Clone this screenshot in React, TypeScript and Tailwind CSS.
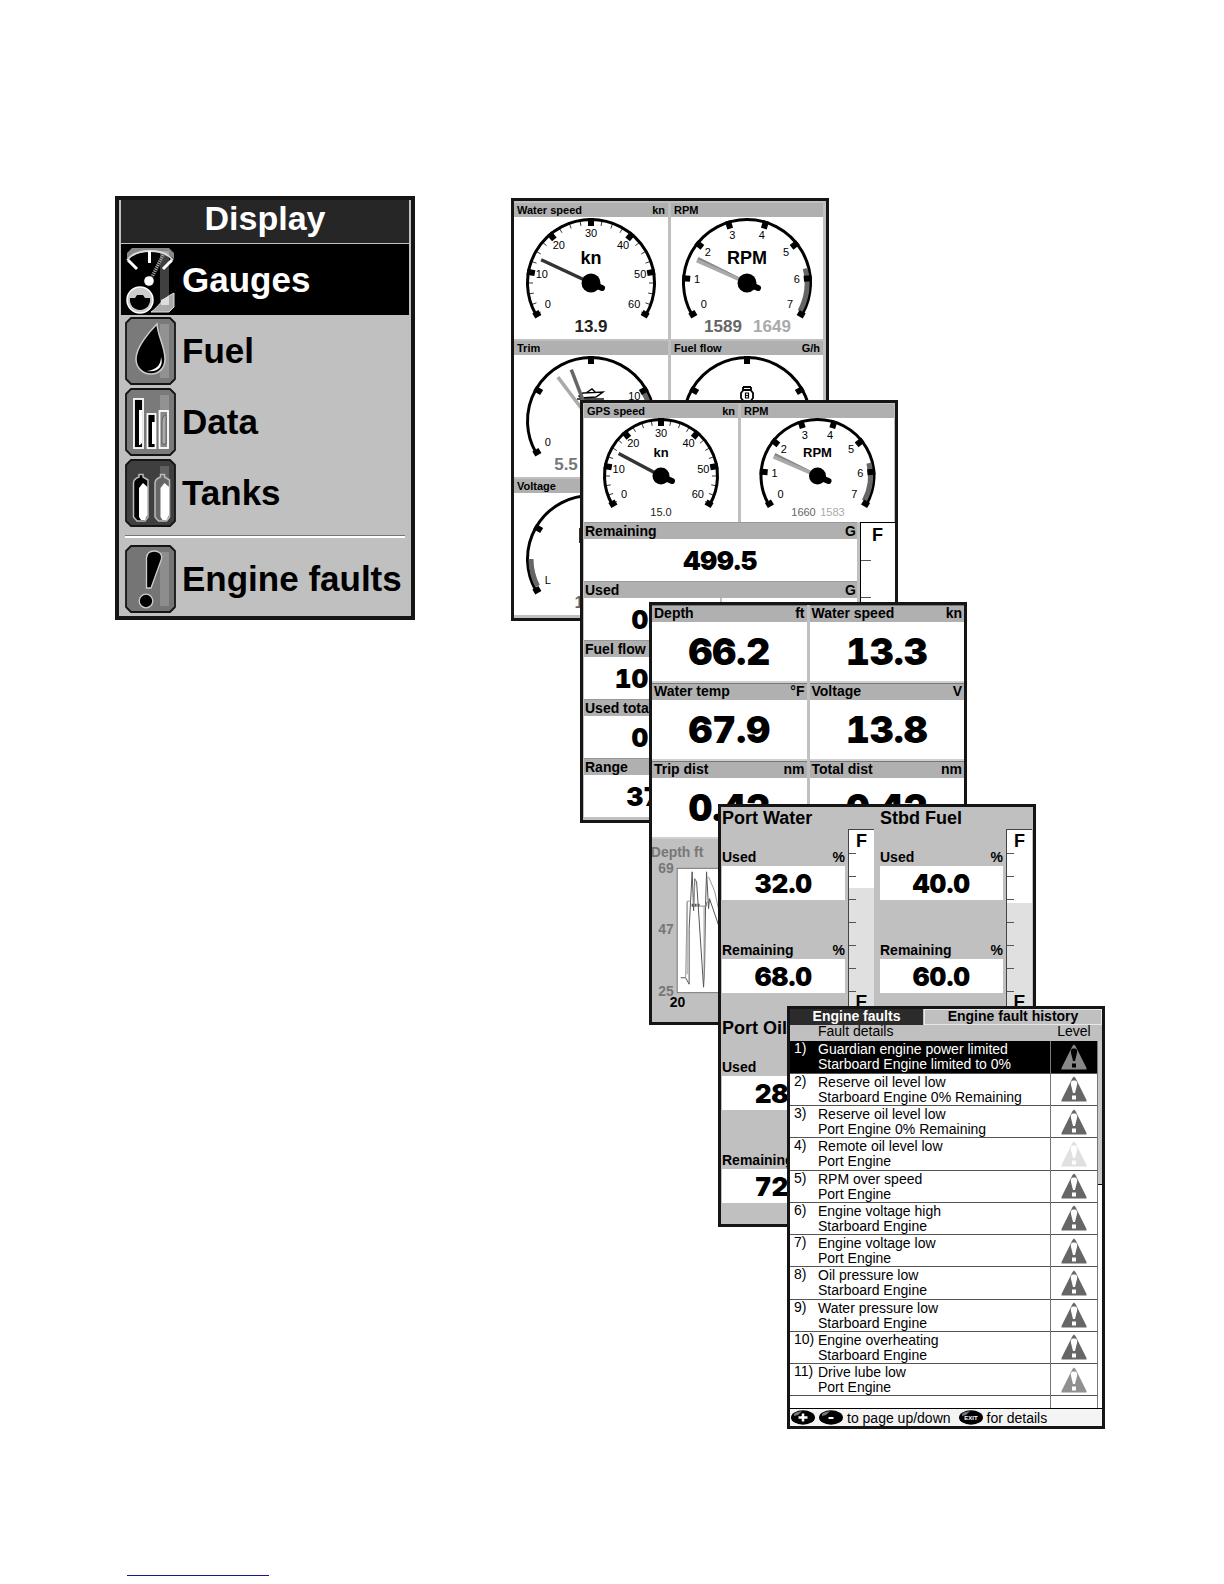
import { useState } from "react";
import type { ReactNode } from "react";

type Needle = { angle: number; color: string };
type Value = { text: string; x: number; color: string };

type GaugeProps = {
  steps: number;
  labels: (string | null)[];
  minor?: boolean;
  zone?: [number, number];
  title?: string;
  needles?: Needle[];
  values?: Value[];
  small?: boolean;
  children?: ReactNode;
};

// 0 degrees points right, angles grow counter-clockwise
const polar = (r: number, deg: number) => {
  const a = (deg * Math.PI) / 180;
  return [r * Math.cos(a), -r * Math.sin(a)];
};

const arc = (r: number, from: number, to: number) => {
  const [x1, y1] = polar(r, from);
  const [x2, y2] = polar(r, to);
  return `M${x1} ${y1}A${r} ${r} 0 ${Math.abs(from - to) > 180 ? 1 : 0} ${from > to ? 1 : 0} ${x2} ${y2}`;
};

function Tick({ r, deg, len, width }: { r: number; deg: number; len: number; width: number }) {
  const [x1, y1] = polar(r, deg);
  const [x2, y2] = polar(r - len, deg);
  return <line x1={x1} y1={y1} x2={x2} y2={y2} stroke="#000" strokeWidth={width} />;
}

function Gauge({
  steps,
  labels,
  minor,
  zone,
  title,
  needles = [],
  values = [],
  small,
  children,
}: GaugeProps) {
  const r = small ? 58 : 65;
  const step = 240 / steps;
  return (
    <svg
      viewBox={small ? "-75 -58 150 104" : "-75 -66 150 122"}
      className={small ? "block h-[104px] w-full" : "block h-[122px] w-full"}
    >
      <path d={arc(r - 1.5, 210, -30)} fill="none" stroke="#000" strokeWidth="3" />
      {zone && (
        <path d={arc(r - 5, zone[0], zone[1])} fill="none" stroke="#666" strokeWidth="5" />
      )}
      {minor &&
        Array.from({ length: steps * 4 + 1 }, (_, i) => (
          <Tick key={i} r={r - 1} deg={210 - (i * step) / 4} len={6} width={0.8} />
        ))}
      {labels.map((label, i) => {
        const deg = 210 - i * step;
        const end = i === 0 || i === steps;
        const [x, y] = polar(end ? r - 17 : r - 15, Math.max(-26, Math.min(206, deg)));
        return (
          <g key={i}>
            <Tick r={end ? r + 1 : r} deg={deg} len={end ? 7 : 8} width={6} />
            {label && (
              <text x={x} y={y + 4} textAnchor="middle" className="text-[11px]">
                {label}
              </text>
            )}
          </g>
        );
      })}
      {title && (
        <text
          y="-19"
          textAnchor="middle"
          className={small ? "text-[13px] font-bold" : "text-[18px] font-bold"}
        >
          {title}
        </text>
      )}
      {children}
      {needles.map((n) => {
        const [x, y] = polar(r - 10, n.angle);
        return (
          <line key={n.angle} x2={x} y2={y} stroke={n.color} strokeWidth="3.5" />
        );
      })}
      <circle r={small ? 8.5 : 9.5} />
      <path d="M4 2L11 5" stroke="#000" strokeWidth="6" strokeLinecap="round" />
      {values.map((v) => (
        <text
          key={v.text}
          x={v.x}
          y={small ? 40 : 49}
          textAnchor="middle"
          fill={v.color}
          className={small ? "text-[11px]" : "text-[17px] font-bold"}
        >
          {v.text}
        </text>
      ))}
    </svg>
  );
}

function GaugeCell({ name, unit, children }: { name: string; unit?: string; children: ReactNode }) {
  return (
    <div className="bg-white">
      <div className="flex h-[14px] items-center justify-between bg-[#b0b0b0] px-[3px] text-[11px] leading-[14px] font-bold">
        <span>{name}</span>
        <span>{unit}</span>
      </div>
      {children}
    </div>
  );
}

function Screen({ className = "", children }: { className?: string; children: ReactNode }) {
  return (
    <section
      className={`relative flex h-[423px] w-[318px] flex-col overflow-hidden border-3 border-[#151515] bg-[#c0c0c0] ${className}`}
    >
      {children}
    </section>
  );
}

function GaugesScreen() {
  return (
    <Screen>
      <div className="grid grid-cols-[154px_1fr] gap-x-[3px] gap-y-[2px] pt-[2px] pr-[3px]">
        <GaugeCell name="Water speed" unit="kn">
          <Gauge
            steps={6}
            labels={["0", "10", "20", "30", "40", "50", "60"]}
            minor
            title="kn"
            needles={[{ angle: 155, color: "#333" }]}
            values={[{ text: "13.9", x: 0, color: "#222" }]}
          />
        </GaugeCell>
        <GaugeCell name="RPM">
          <Gauge
            steps={7}
            labels={["0", "1", "2", "3", "4", "5", "6", "7"]}
            zone={[14, -28]}
            title="RPM"
            needles={[
              { angle: 153.5, color: "#888" },
              { angle: 156, color: "#aaa" },
            ]}
            values={[
              { text: "1589", x: -24, color: "#666" },
              { text: "1649", x: 25, color: "#aaa" },
            ]}
          />
        </GaugeCell>
        <GaugeCell name="Trim">
          <Gauge
            steps={4}
            labels={["0", null, null, "10", null]}
            zone={[30, 0]}
            needles={[
              { angle: 127, color: "#aaa" },
              { angle: 111, color: "#666" },
            ]}
            values={[{ text: "5.5", x: -25, color: "#777" }]}
          >
            <g fill="none" stroke="#000" strokeWidth="1.4">
              <path d="M-12 -25L-8 -28L12 -29L5 -24L-10 -23ZM-5 -28L1 -32L4 -29" />
              <path d="M-14 -22H13" />
            </g>
          </Gauge>
        </GaugeCell>
        <GaugeCell name="Fuel flow" unit="G/h">
          <Gauge steps={4} labels={[null, null, null, null, null]}>
            <g fill="none" stroke="#000" strokeWidth="1.8">
              <path d="M-3.5 -31H3.5L6 -28V-23L3.5 -20H-3.5L-6 -23V-28Z" />
              <path d="M-4 -34V-31M4 -34V-31M-4 -34H4" />
              <path d="M-1.5 -28H1.5V-23H-1.5ZM-1.5 -25.5H1.5" strokeWidth="1.2" />
            </g>
          </Gauge>
        </GaugeCell>
        <GaugeCell name="Voltage">
          <Gauge
            steps={4}
            labels={["L", null, null, null, null]}
            zone={[207, 180]}
            values={[{ text: "13.9", x: 0, color: "#666" }]}
          >
            <path d="M-11 -30H11V-17H-11Z" fill="none" stroke="#333" strokeWidth="2" />
          </Gauge>
        </GaugeCell>
      </div>
    </Screen>
  );
}

const fuelRows = [
  { name: "Remaining", unit: "G", value: "499.5", wide: true },
  { name: "Used", unit: "G", value: "0.0" },
  { name: "Fuel flow", value: "10.10" },
  { name: "Used total", value: "0.0" },
  { name: "Range", value: "370" },
];

function FuelScreen() {
  return (
    <Screen className="-mt-[221px] ml-[69px]">
      <div className="grid grid-cols-[154px_1fr] gap-x-[3px] px-px pt-px">
        <GaugeCell name="GPS speed" unit="kn">
          <Gauge
            small
            steps={6}
            labels={["0", "10", "20", "30", "40", "50", "60"]}
            minor
            title="kn"
            needles={[{ angle: 152, color: "#333" }]}
            values={[{ text: "15.0", x: 0, color: "#222" }]}
          />
        </GaugeCell>
        <GaugeCell name="RPM">
          <Gauge
            small
            steps={7}
            labels={["0", "1", "2", "3", "4", "5", "6", "7"]}
            zone={[14, -28]}
            title="RPM"
            needles={[
              { angle: 153.5, color: "#888" },
              { angle: 156.5, color: "#aaa" },
            ]}
            values={[
              { text: "1660", x: -14, color: "#666" },
              { text: "1583", x: 15, color: "#aaa" },
            ]}
          />
        </GaugeCell>
      </div>
      <div className="flex flex-1">
        <div className="flex flex-1 flex-col pl-px">
          {fuelRows.map((row) => (
            <div key={row.name} className="h-[59px] bg-white">
              <div className="flex h-[17px] justify-between border-t border-[#999] bg-[#b0b0b0] px-px text-[14px] leading-4 font-bold whitespace-nowrap">
                <span>{row.name}</span>
                <span>{row.unit}</span>
              </div>
              <div className="flex h-[42px]">
                <div className="flex flex-1 items-center justify-center pt-[2px] font-[Inter,sans-serif] text-[26px] leading-none font-black tabular-nums">
                  {row.value}
                </div>
                {!row.wide && <div className="flex-1 border-l-2 border-[#c0c0c0]" />}
              </div>
            </div>
          ))}
        </div>
        <div className="ml-[3px] flex w-[35px] flex-col border-t border-l border-black bg-white">
          <div className="h-[37px] pt-[2px] pl-[11px] text-[18px] leading-5 font-bold">F</div>
          {[0, 1, 2, 3, 4, 5, 6].map((i) => (
            <div key={i} className="h-[37px] w-[10px] border-t border-[#555]" />
          ))}
        </div>
      </div>
    </Screen>
  );
}

const readings = [
  { name: "Depth", unit: "ft", value: "66.2" },
  { name: "Water speed", unit: "kn", value: "13.3" },
  { name: "Water temp", unit: "°F", value: "67.9" },
  { name: "Voltage", unit: "V", value: "13.8" },
  { name: "Trip dist", unit: "nm", value: "0.42" },
  { name: "Total dist", unit: "nm", value: "0.42" },
];

function DataScreen() {
  return (
    <Screen className="-mt-[221px] ml-[138px]">
      <div className="grid grid-cols-2 gap-x-[3px]">
        {readings.map((d) => (
          <div key={d.name} className="flex h-[78px] flex-col bg-white">
            <div className="flex h-[17px] justify-between border-t border-[#777] bg-[#b0b0b0] px-[2px] text-[14px] leading-[15px] font-bold">
              <span>{d.name}</span>
              <span>{d.unit}</span>
            </div>
            <div className="flex flex-1 items-center justify-center border-b-2 border-[#d0d0d0] font-[Inter,sans-serif] text-[37px] leading-none font-black tabular-nums">
              {d.value}
            </div>
          </div>
        ))}
      </div>
      <svg viewBox="0 0 312 184" className="block w-full">
        <g fill="#777" className="text-[14px] font-bold">
          <text x="-2" y="18">Depth ft</text>
          <text x="21" y="34" textAnchor="end">69</text>
          <text x="21" y="96" textAnchor="end">47</text>
          <text x="21" y="158" textAnchor="end">25</text>
        </g>
        <text x="17" y="169" className="text-[14px] font-bold">20</text>
        <rect x="24.5" y="29.5" width="272" height="125" fill="#fff" stroke="#777" />
        <g fill="none" stroke="#555" strokeWidth="1">
          <path d="M28 139.5H33L36.5 146V90L39.5 33L41 72L42 40L44 43L51 149L52 130L53 66L54 33L56 70L57 60L76 116" />
          <path d="M33 139L34.5 62.5H38M34.5 63V136M41 67L42.5 40M56 38L62 52L69 84L76 96M51.5 68V140" stroke="#999" />
          <path d="M39 66.5H47" strokeWidth="3" strokeDasharray="2 1" />
          <path d="M47 67.5H54V63.5H57" stroke="#888" />
        </g>
      </svg>
    </Screen>
  );
}

const tanks = [
  { name: "Port Water", used: "32.0", remaining: "68.0", empty: "h-[58px]" },
  { name: "Stbd Fuel", used: "40.0", remaining: "60.0", empty: "h-[73px]" },
  { name: "Port Oil", used: "28.0", remaining: "72.0" },
];

function TankReading({ name, unit, value }: { name: string; unit?: string; value: string }) {
  return (
    <div>
      <div className="flex justify-between text-[14px] leading-4 font-bold">
        <span>{name}</span>
        <span>{unit}</span>
      </div>
      <div className="mt-px flex h-[34px] items-center justify-center bg-white pt-px font-[Inter,sans-serif] text-[26px] leading-none font-black tabular-nums">
        {value}
      </div>
    </div>
  );
}

function TankLevel({ empty }: { empty: string }) {
  return (
    <div className="relative mt-[22px] h-[183px] w-[26px] border-t border-l border-[#444] bg-[#e0e0e0]">
      <div className={`bg-white ${empty}`} />
      <div className="absolute inset-0 flex flex-col">
        {[0, 1, 2, 3, 4, 5, 6, 7].map((i) => (
          <div
            key={i}
            className={`h-[23px] w-[7px] shrink-0 ${i > 0 ? "border-t border-[#555]" : ""}`}
          />
        ))}
      </div>
      <div className="absolute inset-0 flex flex-col items-center justify-between pt-px text-[18px] leading-5 font-bold">
        <span>F</span>
        <span>E</span>
      </div>
    </div>
  );
}

function TanksScreen() {
  return (
    <Screen className="-mt-[221px] ml-[207px]">
      <div className="grid grid-cols-2 gap-x-1">
        {tanks.map((t) => (
          <div key={t.name} className="flex h-[210px] gap-[3px] pl-px">
            <div className="w-[123px]">
              <h3 className="h-[42px] text-[18px] leading-[22px] font-bold">{t.name}</h3>
              <TankReading name="Used" unit={t.empty && "%"} value={t.used} />
              <div className="h-[42px]" />
              <TankReading name="Remaining" unit={t.empty && "%"} value={t.remaining} />
            </div>
            {t.empty && <TankLevel empty={t.empty} />}
          </div>
        ))}
      </div>
    </Screen>
  );
}

const faults = [
  { title: "Guardian engine power limited", detail: "Starboard Engine limited to 0%", color: "#888" },
  { title: "Reserve oil level low", detail: "Starboard Engine 0% Remaining", color: "#666" },
  { title: "Reserve oil level low", detail: "Port Engine 0% Remaining", color: "#666" },
  { title: "Remote oil level low", detail: "Port Engine", color: "#e0e0e0" },
  { title: "RPM over speed", detail: "Port Engine", color: "#666" },
  { title: "Engine voltage high", detail: "Starboard Engine", color: "#666" },
  { title: "Engine voltage low", detail: "Port Engine", color: "#666" },
  { title: "Oil pressure low", detail: "Starboard Engine", color: "#666" },
  { title: "Water pressure low", detail: "Starboard Engine", color: "#666" },
  { title: "Engine overheating", detail: "Starboard Engine", color: "#666" },
  { title: "Drive lube low", detail: "Port Engine", color: "#909090" },
];

function WarningIcon({ color, mark }: { color: string; mark: string }) {
  return (
    <svg viewBox="0 0 26 26" className="mx-auto block size-[26px]">
      <path d="M13 .5L14.5 2L25.5 24V25.5H.5V24L11.5 2Z" fill={color} />
      <path d="M13 4.5C16 4.5 16.5 6.5 16 9L14 17H12L10 9C9.5 6.5 10 4.5 13 4.5Z" fill={mark} />
      <path d="M11 19.5H15V23.5H11Z" fill={mark} />
    </svg>
  );
}

function KeyButton({ label, children }: { label: string; children: ReactNode }) {
  return (
    <button type="button" aria-label={label} className="h-[15px] w-6">
      <svg viewBox="0 0 24 15" className="block size-full">
        <ellipse cx="12" cy="7.5" rx="12" ry="7.2" fill="#000" />
        <path d="M3 4C5 2 8 1.3 11 1.2L7 5L3 6Z" fill="#777" />
        {children}
      </svg>
    </button>
  );
}

function FaultsScreen() {
  const [history, setHistory] = useState(false);
  return (
    <Screen className="-mt-[221px] ml-[276px]">
      <div role="tablist" className="flex h-4 text-[14px] font-bold">
        <button
          type="button"
          role="tab"
          aria-selected={!history}
          onClick={() => setHistory(false)}
          className="w-[133px] bg-[#2b2b2b] pb-[2px] leading-[14px] text-white"
        >
          Engine faults
        </button>
        <button
          type="button"
          role="tab"
          aria-selected={history}
          onClick={() => setHistory(true)}
          className="ml-px flex-1 border border-[#e8e8e8] pb-[2px] leading-3"
        >
          Engine fault history
        </button>
      </div>
      <div className="flex flex-1 bg-white">
        <table className="h-full flex-1 border-collapse text-left text-[14px] leading-[15px]">
          <thead>
            <tr className="h-4 bg-[#c0c0c0] leading-3">
              <th className="w-[28px] p-0" />
              <th className="p-0 align-top font-normal">Fault details</th>
              <th className="w-[47px] p-0 text-center align-top font-normal">Level</th>
            </tr>
          </thead>
          <tbody>
            {faults.map((f, i) => (
              <tr
                key={i}
                className={`h-8 border-b border-[#555] ${i === 0 ? "bg-black text-white" : ""}`}
              >
                <td className="p-0 pl-1 align-top whitespace-nowrap">{i + 1})</td>
                <td className="p-0 pt-px align-top">
                  {f.title}
                  <br />
                  {f.detail}
                </td>
                <td className="border-x border-[#777] p-0">
                  <WarningIcon color={f.color} mark={i === 0 ? "#000" : "#fff"} />
                </td>
              </tr>
            ))}
            <tr className="h-3">
              <td className="p-0" colSpan={2} />
              <td className="border-x border-[#777] p-0" />
            </tr>
          </tbody>
        </table>
        <div className="w-1">
          <div className="h-4 bg-[#c0c0c0]" />
          <div className="h-[144px] border-b border-black bg-[#c8c8c8]" />
        </div>
      </div>
      <div className="flex h-[18px] items-center border-t border-black bg-[#f4f4f4] px-px text-[14px] leading-4">
        <KeyButton label="Page up">
          <path d="M12 3.5V11.5M7.5 7.5H16.5" stroke="#fff" strokeWidth="2.5" />
        </KeyButton>
        <span className="w-1" />
        <KeyButton label="Page down">
          <path d="M9.5 8H14.5" stroke="#fff" strokeWidth="2" />
        </KeyButton>
        <span className="ml-1">to page up/down</span>
        <span className="w-2" />
        <KeyButton label="Exit">
          <text x="12" y="10" textAnchor="middle" fill="#fff" className="text-[6px] font-bold">
            EXIT
          </text>
        </KeyButton>
        <span className="ml-1">for details</span>
      </div>
    </Screen>
  );
}

function IconFrame({ fill, children }: { fill: string; children: ReactNode }) {
  return (
    <svg viewBox="0 0 51 68" className="block h-[68px] w-[51px] shrink-0">
      <path
        d="M6 1H45L50 6V62L45 67H6L1 62V6Z"
        fill={fill}
        stroke="#151515"
        strokeWidth="1.8"
        strokeLinejoin="round"
      />
      <rect x="35" y="7" width="9" height="54" fill="#fff" opacity=".18" />
      {children}
    </svg>
  );
}

const GaugesIcon = () => (
  <svg viewBox="0 0 51 68" className="block h-[68px] w-[51px] shrink-0">
    <path d="M2 13V7L7 2H44L49 7V13C40 3 12 3 2 13Z" fill="#888" />
    <rect x="35" y="5" width="9" height="56" fill="#fff" opacity=".25" />
    <path d="M2 14C12 2 38 2 48 14" fill="none" stroke="#ddd" strokeWidth="1.8" />
    <path d="M3 14L12 23M24.5 5V17M47 14L38 23" stroke="#fff" strokeWidth="3" />
    <path d="M38 9L27 31" stroke="#aaa" strokeWidth="3.5" strokeDasharray="1.2 1" />
    <circle cx="24" cy="35" r="4.8" fill="#fff" />
    <path d="M49 47V61L44 66H26C34 61 36 53 49 47Z" fill="#aaa" stroke="#ddd" />
    <path d="M36 54L44 50V59H36Z" fill="#ddd" />
    <circle cx="15" cy="54" r="13" fill="#ccc" stroke="#fff" strokeWidth="1.5" />
    <path d="M5 52H10L12 49H18L20 52H25C26 59 21 64 15 64C9 64 4 59 5 52Z" fill="#000" />
  </svg>
);

const FuelIcon = () => (
  <IconFrame fill="#7a7a7a">
    <path
      d="M32 7C25 14 11 30 11 42C11 51 18 57 26 57C34 57 40 51 40 42C40 30 33 20 32 7Z"
      fill="#000"
      stroke="#ccc"
      strokeWidth="1.5"
    />
    <path d="M22 54C31 53 36 48 36 40C39 49 33 56 22 54Z" fill="#fff" />
  </IconFrame>
);

const DataIcon = () => (
  <IconFrame fill="#7a7a7a">
    <g stroke="#fff" strokeWidth="1.8">
      <rect x="9" y="11" width="9" height="49" fill="#000" />
      <rect x="22.5" y="26" width="8" height="34" fill="#000" />
      <rect x="34.5" y="23" width="8.5" height="37" fill="#888" />
    </g>
    <path d="M14 22H17V55L15 57H14ZM27 34H30V56H27Z" fill="#fff" />
    <path d="M37 34C37 30 39 27 41 27V56H37Z" fill="#aaa" stroke="#555" strokeWidth=".8" />
  </IconFrame>
);

const TanksIcon = () => (
  <IconFrame fill="#3f3f3f">
    {[0, 21.5].map((x) => (
      <g key={x} transform={`translate(${x} 0)`}>
        <path
          d="M14 18V15.5H18V18L23 21V58L20 62H12L8.5 58V24C8.5 21 11 19 14 18Z"
          fill={x ? "#666" : "#000"}
          stroke="#bbb"
          strokeWidth="1.5"
        />
        <path d="M14 29L18 24L22.5 28V56L20 61H16L14 58Z" fill="#fff" />
      </g>
    ))}
  </IconFrame>
);

const FaultIcon = () => (
  <IconFrame fill="#757575">
    <path
      d="M29 6C34 6 37.5 9 36.5 14L26 43H21.5V13C22 8 25 6 29 6Z"
      fill="#000"
      stroke="#ccc"
      strokeWidth="1.3"
    />
    <circle cx="21" cy="56" r="6.8" fill="#000" stroke="#ccc" strokeWidth="1.3" />
  </IconFrame>
);

const menuItems = [
  { label: "Gauges", icon: <GaugesIcon /> },
  { label: "Fuel", icon: <FuelIcon /> },
  { label: "Data", icon: <DataIcon /> },
  { label: "Tanks", icon: <TanksIcon /> },
];

function MenuButton({ label, icon, active }: { label: string; icon: ReactNode; active?: boolean }) {
  return (
    <button
      type="button"
      className={`flex w-full items-center gap-[6px] pt-[2px] pb-px pl-1 text-left text-[35px] leading-10 font-bold whitespace-nowrap ${
        active ? "bg-black text-white" : "text-black"
      }`}
    >
      {icon}
      {label}
    </button>
  );
}

function DisplayMenu() {
  return (
    <nav className="h-[424px] w-[300px] border-4 border-[#151515] bg-[#c0c0c0] px-[2px]">
      <h2 className="h-11 border-b border-[#c0c0c0] bg-[#262626] text-center text-[34px] leading-9 font-bold text-white">
        Display
      </h2>
      {menuItems.map((item, i) => (
        <MenuButton key={item.label} label={item.label} icon={item.icon} active={i === 0} />
      ))}
      <div className="mx-1 mt-[7px] mb-[5px] h-[3px] border-t border-b-2 border-t-[#777] border-b-white" />
      <MenuButton label="Engine faults" icon={<FaultIcon />} />
    </nav>
  );
}

export default function App() {
  return (
    <div className="flex min-h-screen flex-col bg-white font-['Liberation_Sans',Arial,sans-serif] text-black">
      <main className="flex flex-1 items-start gap-24 pt-[196px] pl-[115px]">
        <DisplayMenu />
        <div className="pt-[2px]">
          <GaugesScreen />
          <FuelScreen />
          <DataScreen />
          <TanksScreen />
          <FaultsScreen />
        </div>
      </main>
      <footer className="pb-2 pl-[127px]">
        <a href="#top" aria-label="Back to top" className="block h-5 w-[142px] border-b border-[#151590]" />
      </footer>
    </div>
  );
}
